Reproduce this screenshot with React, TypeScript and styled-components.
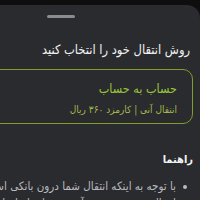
import { FC } from 'react';
import styled, { createGlobalStyle } from 'styled-components';

const Global = createGlobalStyle`
  html, body {
    margin: 0;
    padding: 0;
    background: #0e0e0f;
    overflow: hidden;
  }
  body {
    font-family: "DejaVu Sans Condensed", "DejaVu Sans", sans-serif;
  }
`;

const Screen = styled.div`
  width: 200px;
  height: 200px;
  overflow: hidden;
  padding-top: 5px;
  box-sizing: border-box;
`;

const Sheet = styled.div`
  margin-left: -78px;
  width: 278px;
  height: 220px;
  background: #2a2b2e;
  border-radius: 13px 13px 0 0;
  padding-top: 10px;
  box-sizing: border-box;
`;

const Handle = styled.div`
  width: 28px;
  height: 3px;
  border-radius: 2px;
  background: #8b8c8e;
  margin: 0 auto;
`;

const Content = styled.div`
  direction: rtl;
  padding: 0 7px 0 0;
`;

const Title = styled.h2`
  margin: 22px 3px 0 0;
  font-size: 12.8px;
  font-weight: normal;
  color: #f2f2f2;
  line-height: 20px;
  white-space: nowrap;
`;

const Card = styled.div`
  margin-top: 9px;
  height: 55px;
  box-sizing: border-box;
  border: 1.5px solid #7e9f2c;
  border-radius: 10px;
  padding: 10px 15px 0 0;
  display: flex;
  flex-direction: column;
  gap: 4px;
`;

const CardTitle = styled.div<{ size: number; tone: string }>`
  font-size: ${(p) => p.size}px;
  color: ${(p) => p.tone};
  line-height: 17px;
  white-space: nowrap;
`;

const Heading = styled.h3`
  margin: 27px 0 0 0;
  font-size: 11px;
  font-weight: bold;
  color: #f2f2f2;
  line-height: 18px;
`;

const List = styled.ul`
  margin: 9px 0 0 0;
  padding: 0 6px 0 0;
  list-style: none;
`;

const Item = styled.li`
  position: relative;
  font-size: 11.5px;
  line-height: 17px;
  color: #b9babd;
  padding-right: 11px;
  white-space: nowrap;
  &::before {
    content: '';
    position: absolute;
    right: 0;
    top: 7px;
    width: 4px;
    height: 4px;
    border-radius: 50%;
    background: #b9babd;
  }
`;

const App: FC = () => {
  return (
    <Screen>
      <Global />
      <Sheet>
        <Handle />
        <Content>
          <Title>روش انتقال خود را انتخاب کنید</Title>
          <Card>
            <CardTitle size={12.5} tone="#9bc43a">حساب به حساب</CardTitle>
            <CardTitle size={10} tone="#a3b84a">انتقال آنی | کارمزد ۳۶۰ ریال</CardTitle>
          </Card>
          <Heading>راهنما</Heading>
          <List>
            <Item>با توجه به اینکه انتقال شما درون بانکی است، انتقال وجه آنی خواهد بود</Item>
            <Item>انتقال وجه به صورت آنی و در لحظه انجام می‌شود</Item>
          </List>
        </Content>
      </Sheet>
    </Screen>
  );
};

export default App;
